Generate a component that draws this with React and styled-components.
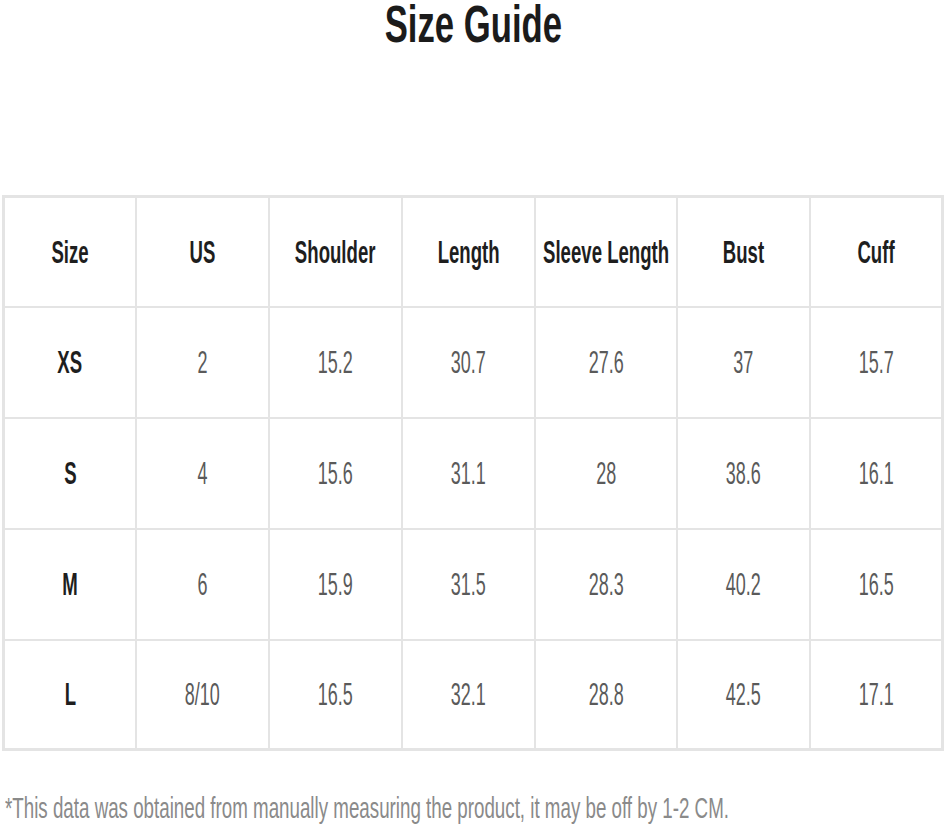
import React from 'react';
import styled, { createGlobalStyle } from 'styled-components';

const GlobalStyle = createGlobalStyle`
  html, body {
    margin: 0;
    padding: 0;
    background: #fff;
    overflow: hidden;
  }
  body {
    font-family: "Liberation Sans", Arial, sans-serif;
  }
`;

const Page = styled.div`
  width: 946px;
  height: 831px;
  overflow: hidden;
  display: flex;
  flex-direction: column;
  align-items: center;
`;

const Title = styled.h1`
  margin: 0;
  font-size: 51px;
  line-height: 50px;
  font-weight: 700;
  color: #1b1b1b;
  transform: scaleX(0.68);
  white-space: nowrap;
`;

const Table = styled.div`
  margin-top: 145px;
  align-self: flex-start;
  margin-left: 2px;
  display: grid;
  grid-template-columns: 130px 131px 131px 131px 140px 131px 130px;
  grid-template-rows: 108px 109px 109px 109px 107px;
  gap: 2px;
  padding: 3px;
  background: #e4e4e4;
`;

const Cell = styled.div`
  background: #fff;
  display: flex;
  align-items: center;
  justify-content: center;
  overflow: visible;
`;

const Label = styled.span`
  display: inline-block;
  white-space: nowrap;
  font-size: 31px;
  line-height: 31px;
  font-weight: ${(p) => (p.$bold ? 700 : 400)};
  color: ${(p) => (p.$bold ? '#1e1e1e' : '#5a5a5a')};
  transform: scaleX(${(p) => (p.$bold ? 0.6 : 0.58)});
`;

const Note = styled.p`
  align-self: flex-start;
  margin: 42px 0 0 5px;
  font-size: 30px;
  line-height: 30px;
  color: #8a8a8a;
  white-space: nowrap;
  transform: scaleX(0.625);
  transform-origin: left center;
`;

const headers = ['Size', 'US', 'Shoulder', 'Length', 'Sleeve Length', 'Bust', 'Cuff'];

const rows = [
  ['XS', '2', '15.2', '30.7', '27.6', '37', '15.7'],
  ['S', '4', '15.6', '31.1', '28', '38.6', '16.1'],
  ['M', '6', '15.9', '31.5', '28.3', '40.2', '16.5'],
  ['L', '8/10', '16.5', '32.1', '28.8', '42.5', '17.1'],
];

export default function App() {
  return (
    <Page>
      <GlobalStyle />
      <Title>Size Guide</Title>
      <Table>
        {headers.map((h) => (
          <Cell key={h}>
            <Label $bold>{h}</Label>
          </Cell>
        ))}
        {rows.map((row) =>
          row.map((v, i) => (
            <Cell key={row[0] + i}>
              <Label $bold={i === 0}>{v}</Label>
            </Cell>
          ))
        )}
      </Table>
      <Note>*This data was obtained from manually measuring the product, it may be off by 1-2 CM.</Note>
    </Page>
  );
}
